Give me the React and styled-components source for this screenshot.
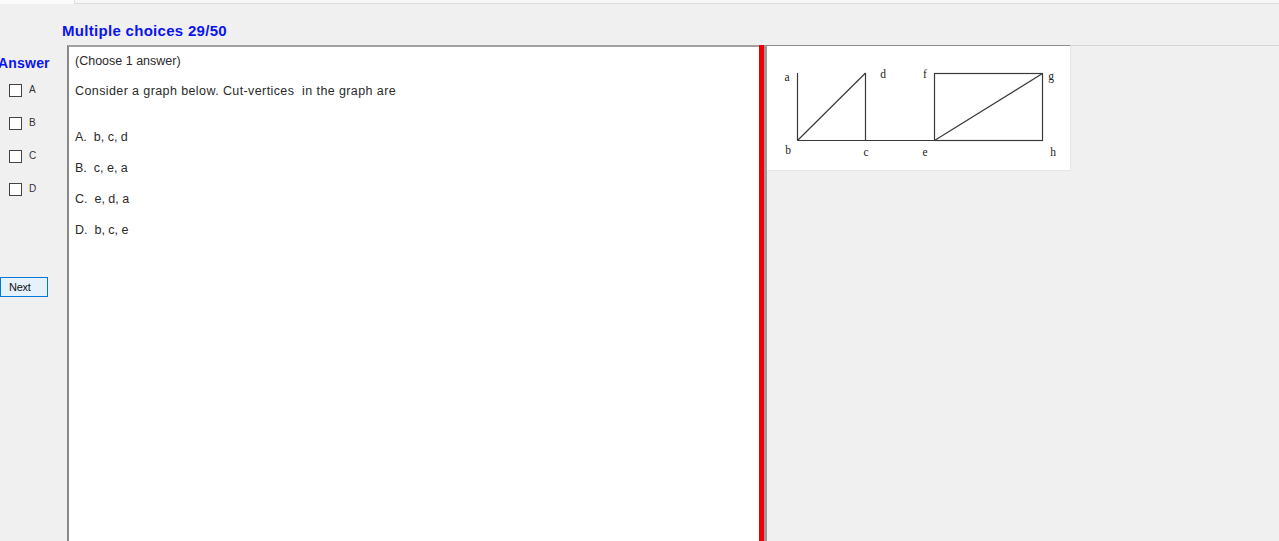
import React from "react";
import styled, { createGlobalStyle } from "styled-components";

const GlobalStyle = createGlobalStyle`
  html, body {
    margin: 0;
    padding: 0;
    background: #f0f0f0;
    overflow: hidden;
  }
  body {
    font-family: "Liberation Sans", Arial, sans-serif;
  }
`;

const StyledPage = styled.div`
  width: 1279px;
  height: 541px;
  display: flex;
  flex-direction: column;
  background: #f0f0f0;
  color: #222;
`;

const TabStrip = styled.div`
  display: flex;
  height: 4px;
  flex: none;

  .tab {
    width: 74px;
    background: #fbfbfb;
    border-right: 1px solid #e2e2e2;
  }
  .rest {
    flex: 1;
    background: #f6f6f6;
    border-bottom: 1px solid #dcdcdc;
  }
`;

const TitleRow = styled.div`
  height: 41px;
  box-sizing: border-box;
  padding: 18px 0 0 62px;
  flex: none;
`;

const Heading = styled.span`
  display: inline-block;
  font-size: ${(p) => p.$size || 15}px;
  line-height: 17px;
  font-weight: 700;
  letter-spacing: ${(p) => p.$track || 0}px;
  color: #0a14f0;
  margin-left: ${(p) => p.$shift || 0}px;
`;

const Body = styled.div`
  flex: 1;
  display: flex;
  min-height: 0;
`;

const Sidebar = styled.div`
  width: 67px;
  flex: none;
  display: flex;
  flex-direction: column;
  padding-top: 10px;
  box-sizing: border-box;
`;

const Choices = styled.div`
  display: flex;
  flex-direction: column;
  gap: 20px;
  margin: 12px 0 0 9px;
`;

const Choice = styled.label`
  display: flex;
  align-items: flex-start;
  gap: 7px;
  height: 13px;
  font-size: 10px;
  line-height: 11px;
  color: #333;
`;

const Box = styled.span`
  width: 13px;
  height: 13px;
  box-sizing: border-box;
  border: 1px solid #444;
  background: #fff;
  flex: none;
`;

const NextButton = styled.button`
  margin-top: 81px;
  width: 48px;
  height: 20px;
  box-sizing: border-box;
  background: #e5f1fb;
  border: 1px solid #0078d7;
  font-family: "Liberation Sans", Arial, sans-serif;
  font-size: 11px;
  letter-spacing: -0.3px;
  color: #111;
  text-align: left;
  padding: 0 0 0 8px;
`;

const QuestionBox = styled.div`
  width: 692px;
  flex: none;
  box-sizing: border-box;
  background: #fff;
  border-top: 2px solid #a0a0a0;
  border-left: 2px solid #8a8a8a;
  padding: 7px 0 0 6px;
  font-size: 12.5px;
  line-height: 15px;
  color: #2a2a2a;
`;

const Line = styled.div`
  margin-top: ${(p) => p.$gap || 0}px;
  letter-spacing: ${(p) => p.$spread || 0}px;
  white-space: pre;
`;

const Splitter = styled.div`
  width: 5px;
  flex: none;
  background: #f00000;
  border-right: 3px solid #9a9a9a;
`;

const RightPane = styled.div`
  flex: 1;
  border-top: 1px solid #d4d4d4;
`;

const ImagePanel = styled.div`
  width: 303px;
  height: 124px;
  background: #fff;
  border-top: 1px solid #8c8c8c;
  margin-top: -1px;
  box-shadow: 1px 1px 0 #e6e6e6;

  svg {
    display: block;
  }
  text {
    font-family: "Liberation Serif", "Times New Roman", serif;
    font-size: 11.5px;
    fill: #222;
  }
`;

const labels = [
  ["a", 20, 31],
  ["d", 116, 28],
  ["f", 158, 28],
  ["g", 284, 30],
  ["b", 21, 104],
  ["c", 99, 106],
  ["e", 158, 106],
  ["h", 286, 106],
];

const Graph = () => (
  <svg width="303" height="123" viewBox="0 0 303 123">
    <g stroke="#3a3a3a" strokeWidth="1.2" fill="none">
      <line x1="30.5" y1="27" x2="30.5" y2="94.5" />
      <line x1="30.5" y1="94.5" x2="98.5" y2="27" />
      <line x1="98.5" y1="27" x2="98.5" y2="94.5" />
      <line x1="30.5" y1="94.5" x2="275.5" y2="94.5" />
      <rect x="167.5" y="27.5" width="108" height="67" />
      <line x1="167.5" y1="94.5" x2="275.5" y2="27.5" />
    </g>
    {labels.map(([t, x, y]) => (
      <text key={t} x={x} y={y} textAnchor="middle" dominantBaseline="central">
        {t}
      </text>
    ))}
  </svg>
);

const options = ["A.  b, c, d", "B.  c, e, a", "C.  e, d, a", "D.  b, c, e"];

const App = () => {
  return (
    <StyledPage>
      <GlobalStyle />
      <TabStrip>
        <div className="tab" />
        <div className="rest" />
      </TabStrip>
      <TitleRow>
        <Heading $size={15} $track={0.3}>
          Multiple choices 29/50
        </Heading>
      </TitleRow>
      <Body>
        <Sidebar>
          <Heading $size={14} $track={0.2} $shift={-2}>
            Answer
          </Heading>
          <Choices>
            {["A", "B", "C", "D"].map((c) => (
              <Choice key={c}>
                <Box />
                {c}
              </Choice>
            ))}
          </Choices>
          <NextButton>Next</NextButton>
        </Sidebar>
        <QuestionBox>
          <Line>(Choose 1 answer)</Line>
          <Line $gap={15} $spread={0.4}>
            Consider a graph below. Cut-vertices  in the graph are
          </Line>
          {options.map((o, i) => (
            <Line key={o} $gap={i === 0 ? 31 : 16}>
              {o}
            </Line>
          ))}
        </QuestionBox>
        <Splitter />
        <RightPane>
          <ImagePanel>
            <Graph />
          </ImagePanel>
        </RightPane>
      </Body>
    </StyledPage>
  );
};

export default App;
